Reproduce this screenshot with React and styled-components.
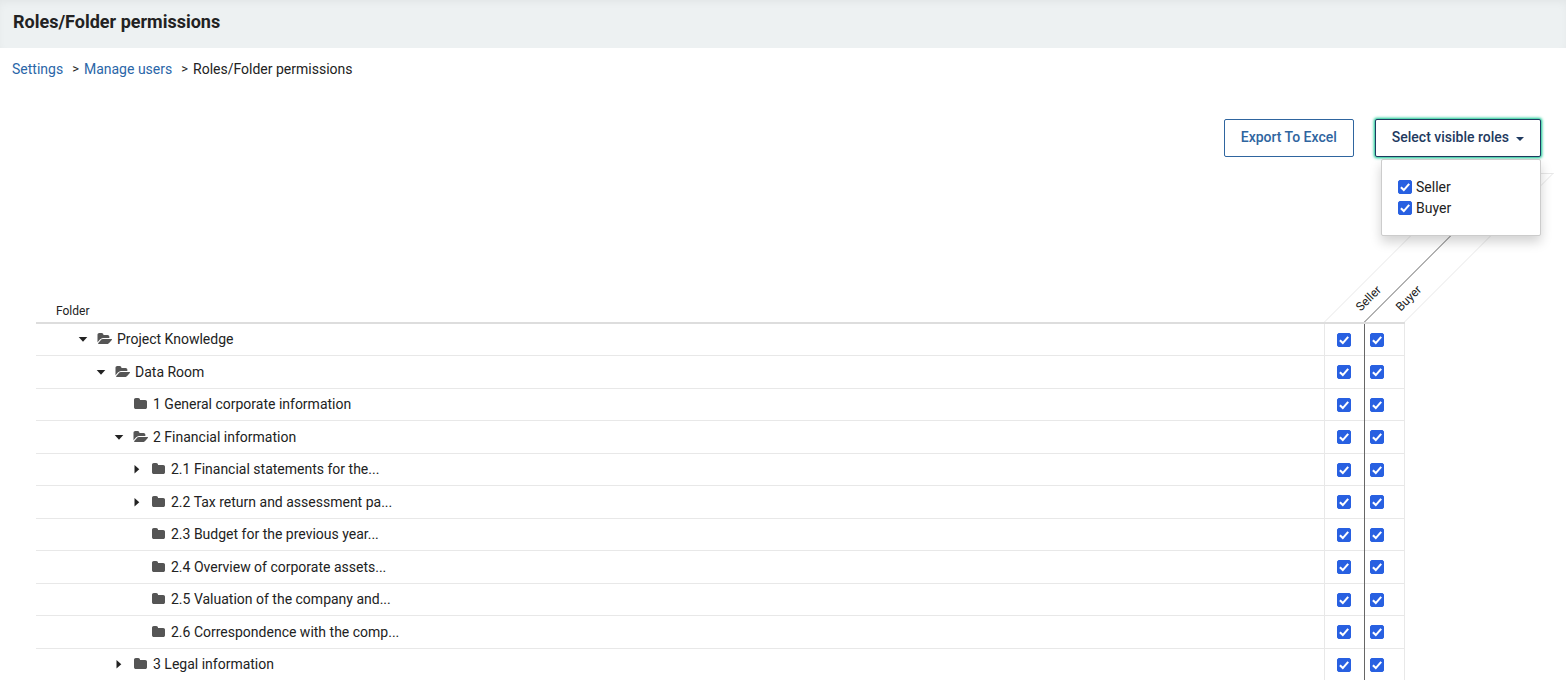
import React, { useState } from 'react';
import styled, { createGlobalStyle } from 'styled-components';

const ROLES = ['Seller', 'Buyer'];

const FOLDERS = [
  { name: 'Project Knowledge', level: 0, state: 'open' },
  { name: 'Data Room', level: 1, state: 'open' },
  { name: '1 General corporate information', level: 2 },
  { name: '2 Financial information', level: 2, state: 'open' },
  { name: '2.1 Financial statements for the...', level: 3, state: 'closed' },
  { name: '2.2 Tax return and assessment pa...', level: 3, state: 'closed' },
  { name: '2.3 Budget for the previous year...', level: 3 },
  { name: '2.4 Overview of corporate assets...', level: 3 },
  { name: '2.5 Valuation of the company and...', level: 3 },
  { name: '2.6 Correspondence with the comp...', level: 3 },
  { name: '3 Legal information', level: 2, state: 'closed' },
];

function FolderIcon({ open }) {
  if (open) {
    return (
      <svg width="15" height="14" viewBox="0 0 1944 1792" fill="currentColor" aria-hidden="true">
        <path d="M1943 952q0 31-31 66l-336 396q-43 51-120.500 86.500t-143.500 35.500h-1088q-34 0-60.500-13t-26.500-43q0-31 31-66l336-396q43-51 120.500-86.500t143.500-35.500h1088q34 0 60.500 13t26.500 43zm-343-344v160h-832q-94 0-197 47.500t-164 119.500l-337 396-5 6q0-4-.5-12.500t-.5-12.500v-960q0-92 66-158t158-66h320q92 0 158 66t66 158v32h544q92 0 158 66t66 158z" />
      </svg>
    );
  }
  return (
    <svg width="13" height="14" viewBox="64 0 1664 1792" fill="currentColor" aria-hidden="true">
      <path d="M1728 608v704q0 92-66 158t-158 66h-1216q-92 0-158-66t-66-158v-960q0-92 66-158t158-66h320q92 0 158 66t66 158v32h672q92 0 158 66t66 158z" />
    </svg>
  );
}

function Caret({ right }) {
  return (
    <svg width="10" height="10" viewBox="0 0 10 10" fill="currentColor" aria-hidden="true">
      <path d={right ? 'M2.500 1v8.500l4.800-4.250z' : 'M.7 3h8.600L5 7.700z'} />
    </svg>
  );
}

function Checkbox(props) {
  return (
    <CheckboxBox>
      <CheckboxInput type="checkbox" {...props} />
      <Tick width="14" height="14" viewBox="0 0 14 14" aria-hidden="true">
        <path d="M2.900 7.300l2.900 2.800 5.400-6.200" fill="none" stroke="#ffffff" strokeWidth="2.100" />
      </Tick>
    </CheckboxBox>
  );
}

export default function App() {
  const [menuOpen, setMenuOpen] = useState(true);
  const [visible, setVisible] = useState({ Seller: true, Buyer: true });
  const [denied, setDenied] = useState({});

  const onToggleRole = role => {
    setVisible({ ...visible, [role]: !visible[role] });
  };

  const onTogglePermission = key => {
    setDenied({ ...denied, [key]: !denied[key] });
  };

  const roles = ROLES.filter(role => visible[role]);

  return (
    <Page>
      <GlobalStyle />
      <Header>
        <Title>Roles/Folder permissions</Title>
      </Header>
      <Breadcrumb aria-label="Breadcrumb">
        <CrumbLink href="#settings">Settings</CrumbLink>
        <Separator>&gt;</Separator>
        <CrumbLink href="#users">Manage users</CrumbLink>
        <Separator>&gt;</Separator>
        <span>Roles/Folder permissions</span>
      </Breadcrumb>
      <Actions>
        <Button type="button">Export To Excel</Button>
        <Dropdown>
          <Button
            type="button"
            $active={menuOpen}
            aria-expanded={menuOpen}
            onClick={() => setMenuOpen(!menuOpen)}
          >
            Select visible roles
            <ButtonCaret width="8" height="4" viewBox="0 0 8 4" aria-hidden="true">
              <path d="M0 0h8L4 4z" fill="currentColor" />
            </ButtonCaret>
          </Button>
          {menuOpen && (
            <Menu>
              {ROLES.map(role => (
                <MenuItem key={role}>
                  <Checkbox checked={visible[role]} onChange={() => onToggleRole(role)} />
                  {role}
                </MenuItem>
              ))}
            </Menu>
          )}
        </Dropdown>
      </Actions>
      <TableWrapper>
        <Table>
          <thead>
            <tr>
              <FolderHead scope="col">Folder</FolderHead>
              {roles.map((role, index) => (
                <RoleHead key={role} scope="col" $last={index === roles.length - 1}>
                  <Slant $strong={index > 0} $last={index === roles.length - 1} />
                  <RoleName>{role}</RoleName>
                </RoleHead>
              ))}
            </tr>
          </thead>
          <tbody>
            {FOLDERS.map(folder => (
              <Row key={folder.name}>
                <FolderCell>
                  <Folder $level={folder.level}>
                    {folder.state ? (
                      <Toggle type="button" aria-label={`Toggle ${folder.name}`}>
                        <Caret right={folder.state === 'closed'} />
                      </Toggle>
                    ) : (
                      <ToggleSpace />
                    )}
                    <IconSlot>
                      <FolderIcon open={folder.state === 'open'} />
                    </IconSlot>
                    {folder.name}
                  </Folder>
                </FolderCell>
                {roles.map((role, index) => {
                  const key = `${role}-${folder.name}`;
                  return (
                    <PermissionCell
                      key={key}
                      $strong={index > 0}
                      $last={index === roles.length - 1}
                    >
                      <Checkbox
                        aria-label={`${role}: ${folder.name}`}
                        checked={!denied[key]}
                        onChange={() => onTogglePermission(key)}
                      />
                    </PermissionCell>
                  );
                })}
              </Row>
            ))}
          </tbody>
        </Table>
      </TableWrapper>
    </Page>
  );
}

const GlobalStyle = createGlobalStyle`
  * {
    box-sizing: border-box;
  }
  html {
    overflow: hidden auto;
    scrollbar-width: none;
  }
  body {
    margin: 0;
    background: #ffffff;
    color: #222222;
    font-family: Roboto, 'Liberation Sans', sans-serif;
    font-size: 14px;
    line-height: 20px;
  }
`;

const Page = styled.div`
  overflow-x: clip;
`;

const Header = styled.header`
  height: 48px;
  padding: 10px 13px;
  background-color: #edf1f2;
  box-shadow: inset 0 4px 8px -2px rgba(0, 0, 0, 0.05);
`;

const Title = styled.h1`
  margin: 0;
  font-size: 18px;
  font-weight: 700;
  line-height: 24px;
`;

const Breadcrumb = styled.nav`
  display: flex;
  padding: 11px 12px;
`;

const CrumbLink = styled.a`
  color: #2a66a8;
  text-decoration: none;
  &:hover {
    text-decoration: underline;
  }
`;

const Separator = styled.span`
  margin: 0 5px 0 9px;
  font-size: 13px;
`;

const Actions = styled.div`
  display: flex;
  justify-content: flex-end;
  gap: 21px;
  padding: 29px 25px 0;
`;

const Button = styled.button`
  display: flex;
  align-items: center;
  height: 38px;
  padding: 0 16px 2px;
  color: ${({ $active }) => ($active ? '#1f3a60' : '#2f659f')};
  background-color: #ffffff;
  border: 1px solid currentColor;
  border-radius: 2px;
  box-shadow: ${({ $active }) => ($active ? '0 0 3px 1px #00c389' : 'none')};
  font-family: inherit;
  font-size: 14px;
  font-weight: 500;
  cursor: pointer;
`;

const ButtonCaret = styled.svg`
  margin: 4px 0 0 7px;
`;

const Dropdown = styled.div`
  position: relative;
`;

const Menu = styled.div`
  position: absolute;
  z-index: 2;
  top: 40px;
  right: 0;
  width: 160px;
  padding: 16px 16px 17px;
  background-color: #ffffff;
  border: 1px solid #cccccc;
  border-radius: 2px;
  box-shadow: 0 6px 12px rgba(0, 0, 0, 0.18);
`;

const MenuItem = styled.label`
  display: flex;
  align-items: center;
  gap: 4px;
  height: 21px;
`;

const CheckboxBox = styled.span`
  display: block;
  position: relative;
  width: 14px;
  height: 14px;
`;

const CheckboxInput = styled.input`
  display: block;
  appearance: none;
  width: 14px;
  height: 14px;
  margin: 0;
  background-color: #ffffff;
  border: 1px solid #767676;
  border-radius: 2px;
  &:checked {
    background-color: #2860e1;
    border-color: #2860e1;
  }
`;

const Tick = styled.svg`
  position: absolute;
  inset: 0;
  visibility: hidden;
  pointer-events: none;
  ${CheckboxInput}:checked + & {
    visibility: visible;
  }
`;

const TableWrapper = styled.div`
  padding: 16px 161px 0 36px;
`;

const Table = styled.table`
  width: 100%;
  border-collapse: separate;
  border-spacing: 0;
`;

const FolderHead = styled.th`
  height: 151px;
  padding: 0 20px 1px;
  border-bottom: 2px solid #dddddd;
  font-size: 12px;
  font-weight: 400;
  text-align: left;
  vertical-align: bottom;
`;

const RoleHead = styled.th`
  position: relative;
  width: ${({ $last }) => ($last ? '41px' : '40px')};
  padding: 0;
  border-bottom: 2px solid #dddddd;
  font-size: 12px;
  font-weight: 400;
`;

const Slant = styled.div`
  position: absolute;
  inset: 0;
  border-top: 1px solid #e8e8e8;
  border-left: 1px solid ${({ $strong }) => ($strong ? '#666666' : '#e8e8e8')};
  border-right: ${({ $last }) => ($last ? '1px solid #e8e8e8' : 'none')};
  transform: skewX(-45deg);
  transform-origin: left bottom;
`;

const RoleName = styled.span`
  position: absolute;
  bottom: 6px;
  left: 41px;
  transform: rotate(-45deg);
  transform-origin: left bottom;
`;

const Row = styled.tr`
  height: 33px;
  &:nth-child(odd) {
    height: 32px;
  }
`;

const FolderCell = styled.td`
  padding: 0 0 1px;
  border-bottom: 1px solid #e8e8e8;
`;

const Folder = styled.div`
  display: flex;
  align-items: center;
  padding-left: ${({ $level }) => 38 + $level * 18}px;
`;

const Toggle = styled.button`
  display: flex;
  justify-content: center;
  width: 18px;
  padding: 0;
  color: #222222;
  background: none;
  border: none;
  cursor: pointer;
`;

const ToggleSpace = styled.span`
  width: 18px;
`;

const IconSlot = styled.span`
  display: flex;
  justify-content: center;
  width: 15px;
  margin: 0 5px;
  color: #555555;
`;

// the row line is an inset shadow so that the column lines run through unbroken
const PermissionCell = styled.td`
  padding: 0 0 1px ${({ $strong }) => ($strong ? '5px' : '12px')};
  box-shadow: inset 0 -1px 0 #e8e8e8;
  border-left: 1px solid ${({ $strong }) => ($strong ? '#666666' : '#e8e8e8')};
  border-right: ${({ $last }) => ($last ? '1px solid #e8e8e8' : 'none')};
`;
